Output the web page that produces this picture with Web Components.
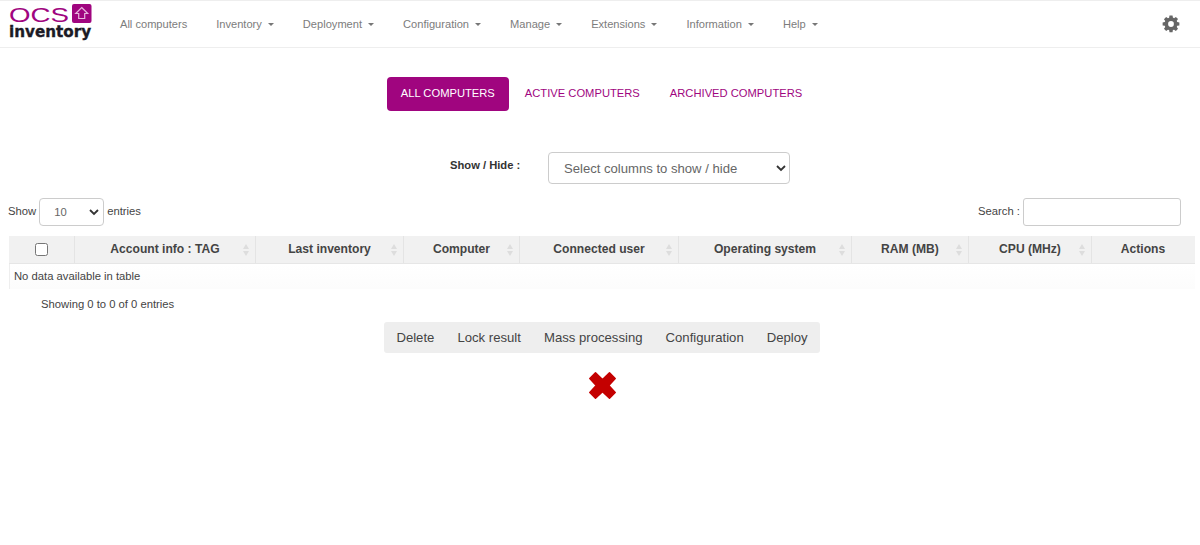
<!DOCTYPE html>
<html><head><meta charset="utf-8"><style>
html,body{margin:0;padding:0;background:#fff;font-family:"Liberation Sans",Arial,sans-serif;color:#333}
</style></head><body>
<ocs-nav></ocs-nav>
<ocs-tabs></ocs-tabs>
<ocs-columns></ocs-columns>
<ocs-table></ocs-table>
<ocs-actions></ocs-actions>
<script>
function def(name,html){customElements.define(name,class extends HTMLElement{constructor(){super();this.attachShadow({mode:'open'}).innerHTML=html;}});}
const gear='<svg width="18" height="18" viewBox="0 0 20 20"><path fill="#666" fill-rule="evenodd" d="M8.300 .5h3.400l.4 2.400 1.300.6 2-1.400 2.400 2.400-1.400 2 .5 1.300 2.400.4v3.400l-2.400.4-.5 1.300 1.400 2-2.400 2.400-2-1.400-1.300.5-.4 2.400H8.300l-.4-2.400-1.300-.5-2 1.400-2.400-2.400 1.400-2-.5-1.300-2.400-.4V8.300l2.400-.4.5-1.300-1.400-2 2.400-2.400 2 1.400 1.300-.6zM10 6.800a3.200 3.200 0 1 0 0 6.400 3.200 3.200 0 0 0 0-6.400z"/></svg>';
const chev='<svg width="10" height="7" viewBox="0 0 10 7"><path d="M1 1l4 4 4-4" fill="none" stroke="#333" stroke-width="1.800"/></svg>';
def('ocs-nav',`<style>
:host{display:flex;align-items:center;border-top:1px solid #eee;border-bottom:1px solid #eee;height:46px;font-size:11.100px;color:#7c7c7c}
.logo{display:block;margin-left:8px;width:86px;height:44px;flex:none;align-self:flex-start;margin-top:2px}
ul{display:flex;list-style:none;margin:0 0 0 26px;padding:0;flex:1;gap:29px}
.c::after{content:"";display:inline-block;margin-left:6px;vertical-align:2px;border-top:3.500px solid #777;border-left:3.500px solid transparent;border-right:3.500px solid transparent}
.gear{margin-right:20px;display:block;height:18px}
</style>
<svg class="logo" viewBox="0 0 86 44">
<text x="1" y="19" font-family="Liberation Sans" font-size="19.500" textLength="60" lengthAdjust="spacingAndGlyphs" fill="#a0057f">OCS</text>
<rect x="64" y="1" width="19.500" height="19" rx="2" fill="#a0057f"/>
<path d="M73.700 4.500l6 6h-3v5h-6v-5h-3z" fill="none" stroke="#e6b5dc" stroke-width="1.200"/>
<text x="1" y="33.500" font-family="DejaVu Sans" font-size="15.200" font-weight="700" fill="#1c1a25" stroke="#1c1a25" stroke-width=".35">inventory</text>
</svg>
<ul><li>All computers</li><li class="c">Inventory</li><li class="c">Deployment</li><li class="c">Configuration</li><li class="c">Manage</li><li class="c">Extensions</li><li class="c">Information</li><li class="c">Help</li></ul>
<span class="gear">${gear}</span>`);
def('ocs-tabs',`<style>
:host{display:flex;justify-content:center;padding:29px 0 0 4px;font-size:11.200px;color:#a0057f;height:34px}
a{display:flex;align-items:center;padding:0 15px 2px;border-radius:4px;height:34px;box-sizing:border-box}
a.on{background:#a0057f;color:#fff;padding:0 14px 2px;margin-right:1px}
</style><a class="on">ALL COMPUTERS</a><a>ACTIVE COMPUTERS</a><a>ARCHIVED COMPUTERS</a>`);
def('ocs-columns',`<style>
:host{display:flex;align-items:flex-start;padding:41px 0 0 450px;height:46px}
b{font-size:11.200px;color:#333;width:98px;margin-top:6px;line-height:14px}
.s{box-sizing:border-box;width:242px;height:32px;border:1px solid #ccc;border-radius:4px;font-size:13.100px;color:#666;display:flex;align-items:center;padding:0 3px 0 15px;justify-content:space-between}
</style><b>Show / Hide :</b><div class="s"><span>Select columns to show / hide</span>${chev}</div>`);
const sort='<svg class="sort" width="6" height="12" viewBox="0 0 6 12"><path d="M3 0l3 5H0zM3 12l3-5H0z" fill="#ddd"/></svg>';
const cols=[['Account info : TAG',181,1],['Last inventory',148,1],['Computer',116,1],['Connected user',159,1],['Operating system',173,1],['RAM (MB)',117,1],['CPU (MHz)',123,1],['Actions',104,0]];
def('ocs-table',`<style>
:host{display:block;font-size:11.250px;color:#444}
.top{display:flex;justify-content:space-between;align-items:center;padding:0 19px 0 8px;height:28px;margin-bottom:10px}
.top>div{display:flex;align-items:center;gap:3px}
.t{margin-top:-2px}
.sel{box-sizing:border-box;width:65px;height:28px;border:1px solid #ccc;border-radius:4px;color:#666;display:flex;align-items:center;justify-content:space-between;padding:0 4px 0 14px}
.inp{box-sizing:border-box;width:158px;height:28px;border:1px solid #ccc;border-radius:3px}
.head{display:flex;margin-left:9px;width:1186px;height:27px;background:#f1f1f1;border-bottom:1px solid #e6e6e6;font-weight:700;font-size:12.100px}
.cell{position:relative;display:flex;align-items:center;justify-content:center;box-sizing:border-box;border-right:1px solid #e4e4e4;flex:none;padding-bottom:2px}
.cell:last-child{border:0;padding-right:2px}
.sort{position:absolute;right:6px;top:8px}
.cb{width:66px;justify-content:flex-start;padding:0 0 0 26px}
.cb i{display:block;border:1px solid #767676;border-radius:2.500px;background:#fff;width:11px;height:11px}
.empty{margin-left:9px;width:1186px;height:25px;line-height:24px;padding-left:4px;box-sizing:border-box;border-left:1px solid #eee;background:linear-gradient(#fff,#fcfcfc)}
.info{padding:8px 0 0 41px;line-height:14px}
</style>
<div class="top"><div><span class="t">Show</span> <span class="sel">10${chev}</span> <span class="t">entries</span></div><div><span class="t">Search :</span> <span class="inp"></span></div></div>
<div class="head"><div class="cell cb"><i></i></div>${cols.map(c=>`<div class="cell" style="width:${c[1]}px">${c[0]}${c[2]?sort:''}</div>`).join('')}</div>
<div class="empty">No data available in table</div>
<div class="info">Showing 0 to 0 of 0 entries</div>`);
def('ocs-actions',`<style>
:host{display:block;text-align:center;padding:11px 0 0 4px}
.bar{display:inline-flex;gap:23px;background:#eee;border-radius:3px;height:31px;align-items:center;padding:0 12px;font-size:13.150px;color:#444;vertical-align:top}
.x{display:block;margin:19px auto 0}
</style><div class="bar"><span>Delete</span><span>Lock result</span><span>Mass processing</span><span>Configuration</span><span>Deploy</span></div>
<svg class="x" width="27" height="27" viewBox="0 0 27 27"><path d="M.8 6.500L6.500.8 13.500 7.500 20.500.8 26.200 6.500 19.800 13.500 26.200 20.500 20.500 26.200 13.500 19.800 6.500 26.200.8 20.500 7.200 13.500z" fill="#c40000" stroke="#c40000" stroke-width="1.500" stroke-linejoin="round"/></svg>`);
</script></body></html>
